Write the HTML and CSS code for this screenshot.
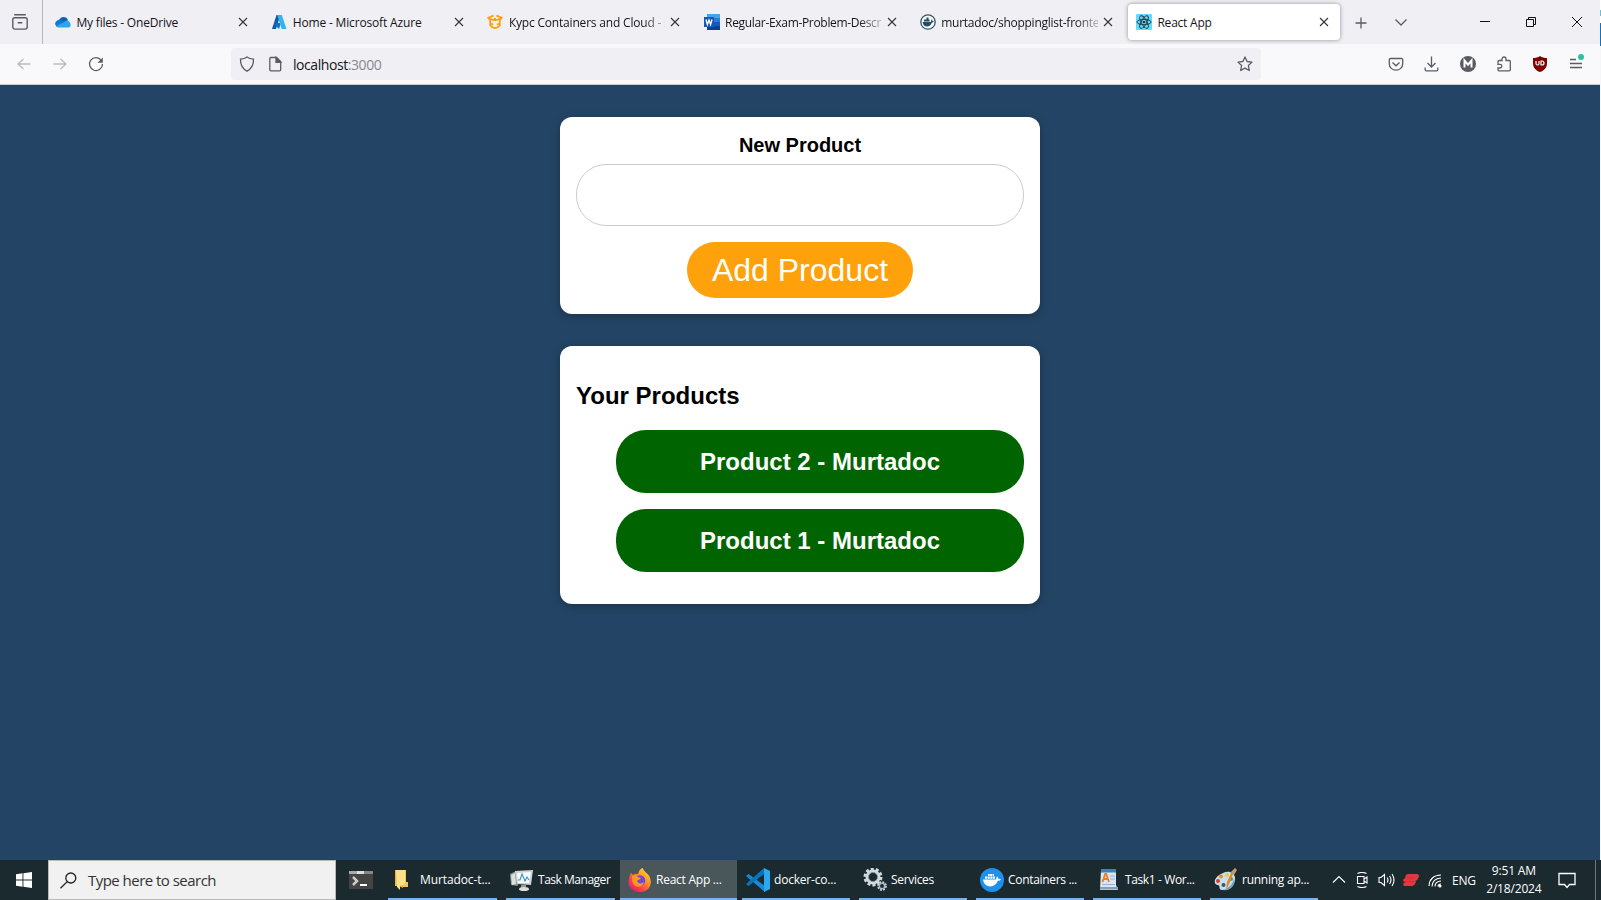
FILE: index.html
```html
<!DOCTYPE html>
<html lang="en">
<head>
<meta charset="utf-8">
<title>React App</title>
<link rel="stylesheet" href="styles.css">
</head>
<body>
<div class="desktop">
<div class="browser">
  <header class="tabbar">
    <div class="view"><svg width="16" height="16" viewBox="0 0 16 16" fill="none" stroke="#5b5b66" stroke-width="1.4" stroke-linecap="round"><path d="M2.7.8h10.600"/><rect x=".8" y="3.800" width="14.400" height="11.300" rx="2"/><path d="M6.200 8.800h3.600"/></svg></div>
    <div class="tabs">
      <div class="tab">
        <svg class="fav" viewBox="0 0 16 16"><path d="M4.500 5.500A4.700 4.700 0 0 1 13 6l-3 4-8-3z" fill="#0b63b8"/><path d="M2 6.800a4 4 0 0 1 4.200-.6L13 10l-9 3A3.300 3.300 0 0 1 2 6.800z" fill="#0f7ad4"/><path d="M9 8.300c2-2.500 6-1.500 6.300 1.300.8 1.600.3 4-2.100 4H4a4 4 0 0 1-3-1.600z" fill="#2aa7ea"/></svg>
        <span class="label l1">My files - OneDrive</span><svg class="x" viewBox="0 0 16 16"><path d="m4 4 8 8m0-8-8 8"/></svg>
      </div>
      <div class="tab">
        <svg class="fav" viewBox="0 0 16 16"><path d="M5.500 1h4L5 15H1z" fill="#15589e"/><path d="M5 9h5l-2 6-4-4z" fill="#0b70cb"/><path d="M6.200 1h4.600L15.500 15h-4.800z" fill="#35b3ee"/></svg>
        <span class="label l2">Home - Microsoft Azure</span><svg class="x" viewBox="0 0 16 16"><path d="m4 4 8 8m0-8-8 8"/></svg>
      </div>
      <div class="tab">
        <svg class="fav" viewBox="0 0 16 16" fill="none" stroke="#ff9f0f" stroke-width="1.700"><path d="M6.600 1.600 1.200 3.600l2 2.600v5.400c1.200 1.700 3 2.500 4.800 2.600 1.800-.1 3.600-.9 4.800-2.600V6.200l2-2.600-5.400-2M1.200 4.200l6 2 1-2M14.800 4.200l-6 2-1-2M3.200 9.600l3 1M12.800 9.600l-3 1"/></svg>
        <span class="label l3">Курс Containers and Cloud - я</span><svg class="x" viewBox="0 0 16 16"><path d="m4 4 8 8m0-8-8 8"/></svg>
      </div>
      <div class="tab">
        <svg class="fav" viewBox="0 0 16 16"><path fill="#41a5ee" d="M3 0h13v4H3z"/><path fill="#2b7cd3" d="M3 4h13v4H3z"/><path fill="#185abd" d="M3 8h13v4H3z"/><path fill="#103f91" d="M3 12h13v4H3z"/><path fill="#1757b5" d="M0 3h10v10H0z"/><path d="m2 5.500 1.400 5L5 6l1.600 4.500 1.400-5" fill="none" stroke="#fff" stroke-width="1.400"/></svg>
        <span class="label l4">Regular-Exam-Problem-Descri</span><svg class="x" viewBox="0 0 16 16"><path d="m4 4 8 8m0-8-8 8"/></svg>
      </div>
      <div class="tab">
        <svg class="fav" viewBox="0 0 16 16"><circle cx="8" cy="8" r="7.200" fill="#f4f8fa" stroke="#355568" stroke-width="1.300"/><path d="M2.600 8h8.200c.4-1 .2-2 .9-2.600.8.5.8 1.300.8 1.700.6 0 1 .1 1.300.4-.4.8-1.100 1.100-2 1.100C10.500 14 3 13.800 2.600 8zM4 5.500h5.500v2H4zM6.500 3.600h2v2h-2z" fill="#254c63"/></svg>
        <span class="label l5">murtadoc/shoppinglist-fronte</span><svg class="x" viewBox="0 0 16 16"><path d="m4 4 8 8m0-8-8 8"/></svg>
      </div>
      <div class="tab active">
        <svg class="fav" viewBox="0 0 16 16"><rect width="16" height="16" rx="1" fill="#61dafb"/><g fill="none" stroke="#20343d" stroke-width=".9"><ellipse cx="8" cy="8" rx="7" ry="2.700"/><ellipse cx="8" cy="8" rx="7" ry="2.700" transform="rotate(60 8 8)"/><ellipse cx="8" cy="8" rx="7" ry="2.700" transform="rotate(120 8 8)"/></g><circle cx="8" cy="8" r="1.300" fill="#20343d"/></svg>
        <span class="label l6">React App</span><svg class="x" viewBox="0 0 16 16"><path d="m4 4 8 8m0-8-8 8"/></svg>
      </div>
    </div>
    <div class="tabtools">
      <svg width="14" height="14" viewBox="0 0 14 14"><path d="M7 1.500v11M1.500 7h11"/></svg>
      <svg width="14" height="14" viewBox="0 0 14 14"><path d="m1.500 3.500 5.500 5.500L12.500 3.500"/></svg>
    </div>
    <div class="window-controls">
      <svg width="10" height="10" viewBox="0 0 10 10"><path d="M0 4.500h10"/></svg>
      <svg width="10" height="10" viewBox="0 0 10 10"><path d="M.5 2.500h7v7h-7zM2.500 2.500v-2h7v7h-2"/></svg>
      <svg width="10" height="10" viewBox="0 0 10 10"><path d="m0 0 10 10M10 0 0 10"/></svg>
    </div>
  </header>
  <nav class="navbar">
    <div class="history">
      <svg class="off" width="16" height="16" viewBox="0 0 16 16"><path d="M14.500 8H2m5.500-5L2 8l5.500 5"/></svg>
      <svg class="off" width="16" height="16" viewBox="0 0 16 16"><path d="M1.500 8H14M8.500 3 14 8l-5.500 5"/></svg>
      <svg width="16" height="16" viewBox="0 0 16 16"><path d="M13.300 4.300A6.500 6.500 0 1 0 14.500 8"/><path d="M14.800 1.500v5.200H9.600z" fill="#5b5b66" stroke="none"/></svg>
    </div>
    <div class="urlbar">
      <svg width="16" height="16" viewBox="0 0 16 16"><path d="M8 .9c2 1.500 4 2 6.500 2.200.2 5.500-1.500 9.500-6.500 12.100C3 12.600 1.300 8.600 1.500 3.100 4 2.900 6 2.400 8 .9z"/></svg>
      <svg width="16" height="16" viewBox="0 0 16 16"><path d="M3.800 1.500h5.800L13.700 5.600v8.200a1 1 0 0 1-1 1H3.800a1 1 0 0 1-1-1V2.500a1 1 0 0 1 1-1z"/><path d="M9 1.500v4.800h4.700z" fill="#5b5b66"/></svg>
      <span class="url">localhost<span class="port">:3000</span></span>
      <svg width="16" height="16" viewBox="0 0 16 16"><path d="m8 1 2.100 4.500 4.900.6-3.600 3.400.9 5L8 12.100l-4.300 2.400.9-5L1 6.100l4.900-.6z" stroke-linejoin="round"/></svg>
    </div>
    <div class="extensions">
      <svg width="16" height="16" viewBox="0 0 16 16"><path d="M2.500 2.500h11a1.200 1.200 0 0 1 1.200 1.200V8A6.700 6.200 0 0 1 1.300 8V3.700a1.200 1.200 0 0 1 1.200-1.200zM4.500 6.500 8 9.800l3.500-3.300"/></svg>
      <svg width="16" height="16" viewBox="0 0 16 16"><path d="M7.500.5v10M3.500 7l4 4 4-4M1.200 11.500v2.300a1 1 0 0 0 1 1h10.600a1 1 0 0 0 1-1v-2.300"/></svg>
      <svg width="16" height="16" viewBox="0 0 16 16"><circle cx="8" cy="8" r="8" fill="#5b5b66" stroke="none"/><path d="M4.500 11.500v-7L8 8.700l3.500-4.200v7" stroke="#fff" stroke-width="2"/></svg>
      <svg width="16" height="16" viewBox="0 0 16 16"><path d="M2 7V5.500a1 1 0 0 1 1-1h3V3a2 2 0 0 1 4 0v1.500h3.300a1 1 0 0 1 1 1v8.300a1 1 0 0 1-1 1H3a1 1 0 0 1-1-1V12h2a1.800 1.800 0 0 0 0-3.600H2z"/></svg>
      <span class="ublock"><svg width="16" height="16" viewBox="0 0 16 16"><path d="M8 0c2 1.500 4.500 2 7 2v5c0 5-3 7.500-7 9-4-1.500-7-4-7-9V2c2.500 0 5-.5 7-2z" fill="#800000" stroke="none"/><path d="M4 5v2.500a1.500 1.500 0 0 0 3 0V5M9 5h1a2 2 0 0 1 0 4H9z" stroke="#fff" stroke-width="1.200"/></svg></span>
      <span class="menu"><svg width="16" height="16" viewBox="0 0 16 16"><path d="M2 3.500h6M2 7.500h12M2 11.500h12"/></svg><i class="dot"></i></span>
    </div>
  </nav>
  <main class="page">
    <section class="card form-card">
      <label class="form-label" for="p">New Product</label>
      <input class="field" id="p" type="text">
      <button class="add">Add Product</button>
    </section>
    <section class="card list-card">
      <h2 class="heading">Your Products</h2>
      <ul class="products"><li class="product">Product 2 - Murtadoc</li><li class="product">Product 1 - Murtadoc</li></ul>
    </section>
  </main>
</div>
<div class="edge"></div>
</div>
<footer class="taskbar">
  <div class="start"><svg width="16" height="16" viewBox="0 0 16 16" fill="#fff"><path d="m0 2.200 6.500-.9v6.200H0zM7.400 1.200 16 0v7.500H7.400zM0 8.400h6.500v6.300L0 13.800zM7.400 8.400H16V16l-8.600-1.200z"/></svg></div>
  <div class="search"><svg width="17" height="17" viewBox="0 0 17 17" fill="none" stroke="#222" stroke-width="1.300"><circle cx="10.800" cy="6" r="5"/><path d="M7.200 9.600.5 16.300"/></svg><span class="hint">Type here to search</span></div>
  <div class="pinned"><svg width="24" height="18" viewBox="0 0 24 18"><path fill="#444" d="M0 0h24v18H0z"/><path fill="#aaa" d="M0 0h8v3H0z"/><path fill="#ddd" d="M8 0h7v3H8z"/><path fill="#888" d="M15 0h9v3h-9z"/><path d="m4 6 4 4-4 4" stroke="#ccc" stroke-width="2.500" fill="none"/><path d="M11 14h7" stroke="#fff" stroke-width="2"/></svg></div>
  <div class="task wide"><svg class="icon" viewBox="-2 0 24 24"><path d="M3 2h9v12h2v5H7z" fill="#f3c75b"/><path d="M1 2h8v18l-4-2H1z" fill="#e9b94a"/><path d="M2 2h9v14l-5 2v4l-3-3z" fill="#ffe08a"/></svg><span class="name n1">Murtadoc-t...</span></div>
  <div class="task wide"><svg class="icon" viewBox="0 0 24 24"><path d="m0 6 6-3 2 15-7-1z" fill="#8b9491"/><path d="m1 7 4-2 1 11-4 1z" fill="#dce0dc"/><path d="m5 3 18-1-2 15-14-1z" fill="#d0d3d0"/><path d="m7 5 14-1-2 11H8z" fill="#f4fbff"/><path d="m8 12 2 0 2-6 3 7 2-4 2 3" fill="none" stroke="#388fb9" stroke-width="1.100"/><path d="M11 17h5v4h-5z" fill="#999"/><ellipse cx="14" cy="21" rx="5" ry="2" fill="#ddd"/></svg><span class="name n2">Task Manager</span></div>
  <div class="task wide current"><svg class="icon" viewBox="0 0 24 24"><defs><linearGradient id="ff" x1="1" y1="0" x2=".2" y2="1"><stop stop-color="#fff044"/><stop offset=".4" stop-color="#ff9a24"/><stop offset=".75" stop-color="#ff3d49"/><stop offset="1" stop-color="#e41b78"/></linearGradient></defs><path d="M3 5c1 0 1 1 2 2 2-2 4-1 5-1 1-4 3-6 5-6 0 4 6 5 7 10C25 18 19 24 12 24S-1 19 1 11c0-2 1-4 2-6z" fill="url(#ff)"/><circle cx="12" cy="12.500" r="5.300" fill="#7046df"/><path d="M4 8c3-1 5 0 6 1l3 1c-1 2-3 1.500-4 3 1 3 5 3 7 1-1 5-7 6-10 3-2-2-2-5-2-9z" fill="#ff981f"/></svg><span class="name n3">React App ...</span></div>
  <div class="task"><svg class="icon" viewBox="0 0 24 24"><path d="M0 8 2.500 6 19 18v6z" fill="#168ad2"/><path d="M0 16 18 0v6L2.500 18z" fill="#0875bd"/><path d="m18 0 6 3v18l-6 3z" fill="#29a9f1"/></svg><span class="name n4">docker-co...</span></div>
  <div class="task"><svg class="icon" viewBox="0 0 24 24" fill="none"><circle cx="10" cy="9" r="8" stroke="#d2dadd" stroke-width="3" stroke-dasharray="3 2.030"/><circle cx="10" cy="9" r="6" stroke="#d2dadd" stroke-width="3"/><circle cx="10" cy="9" r="4.500" stroke="#7d91a2" stroke-width=".8"/><circle cx="19" cy="18" r="3.900" stroke="#c9d3da" stroke-width="2" stroke-dasharray="1.800 1.260"/><circle cx="19" cy="18" r="2.700" stroke="#aab8c5" stroke-width="1.500"/></svg><span class="name n5">Services</span></div>
  <div class="task"><svg class="icon" viewBox="0 0 24 24"><circle cx="12" cy="12" r="12" fill="#1d91ed"/><path d="M3 11.500h13c.5-1 .2-2 1-3 1 .6 1.300 1.400 1.200 2.300 1.200-.2 2.300 0 2.800.6-.7 1-1.800 1.500-3.200 1.400C15 21 4 20 3 11.500zM5 8.500h10v2.300H5zM8 6h6v2H8z" fill="#fff"/><path d="M7.500 8v3m2.500-5v5m2.500-5v5" stroke="#1d91ed" stroke-width=".5"/></svg><span class="name n6">Containers ...</span></div>
  <div class="task"><svg class="icon" viewBox="0 0 24 24"><path d="M4 2h15v15l2 5H3z" fill="#d7e8f5"/><path d="M4 1h15v3.500H4z" fill="#477eb8"/><path d="M3 19h18v2.500H3z" fill="#8c9eab"/><path d="m5.500 14 2.700-8h1l2.800 8M6.500 11H11" fill="none" stroke="#f57b20" stroke-width="1.800"/><path d="M13 8h5m-5 3h5M5 16.500h13" stroke="#8fb2d4"/></svg><span class="name n7">Task1 - Wor...</span></div>
  <div class="task"><svg class="icon" viewBox="0 0 24 24"><path d="M9 5c6-3 13 0 12 7-1 7-6 11-13 10-4 0-1-4-4-5-5 0-5-8 5-12z" fill="#c5e0ef"/><path d="M20 10c-1 7-6 11-12 12 9 1 14-5 12-12z" fill="#69a5cb"/><circle cx="4" cy="13" r="2" fill="#d63d30"/><circle cx="7" cy="8.500" r="2" fill="#e98a2d"/><circle cx="13" cy="7" r="2" fill="#f1c936"/><circle cx="17" cy="11" r="2" fill="#50a74b"/><circle cx="9.500" cy="17" r="2" fill="#3b5868"/><path d="m20 3-4 11-4 9 1-9 5-11z" fill="#e08a2c"/><path d="m17 4 4-4 2 2-3 5z" fill="#c39a71"/></svg><span class="name n8">running ap...</span></div>
  <div class="tray">
    <svg width="14" height="16" viewBox="0 0 14 16"><path d="m1 10.500 6-6 6 6"/></svg>
    <svg width="16" height="16" viewBox="0 0 16 16"><path d="M3.500 1.500Q8-.5 12.500 1.500M3.500 14.500q4.500 2 9 0M3.500 4.500h6.500v7H3.500zM10 7l3-2v6l-3-2"/></svg>
    <svg width="17" height="16" viewBox="0 0 17 16"><path d="M1 5.500h2l3.500-3v11L3 10.500H1zM9 5.500q2 2.500 0 5M11.500 4q3 4 0 8M14 2q4 6 0 12"/></svg>
    <svg width="16" height="16" viewBox="0 0 16 16"><path d="M5.500 2H14a2 2 0 0 1 1.700 3l-.7 1.800A3.500 3.500 0 0 1 12 9l1 .5-.6 1.800A3.500 3.500 0 0 1 9.500 14H2a1.600 1.600 0 0 1-1.600-2.400A4 4 0 0 1 3 9.700H1.500A1.500 1.500 0 0 1 .3 7.500 3 3 0 0 1 3 6l-1-.5.5-1.500A3 3 0 0 1 5.500 2z" fill="#e03a40" stroke="none"/><path d="M4 6h8M3 9.500h8" stroke="#a8333a" stroke-width=".6"/></svg>
    <svg width="16" height="16" viewBox="0 0 16 16"><path d="M2 14Q2.500 3.500 14 3M5 14.500Q5.500 6.500 14 6M8 14.500Q8 9.500 14 9M11 14.500q0-2.500 3-2.500" /><circle cx="13" cy="14" r="1" fill="#fff"/></svg>
    <span class="lang">ENG</span>
    <div class="clock"><span class="time">9:51 AM</span><span class="date">2/18/2024</span></div>
    <svg width="18" height="18" viewBox="0 0 18 18"><path d="M1 2.500h16v11h-5.500L9 16.500l-2.500-3H1z" stroke-width="1.300"/></svg>
    <i class="peek"></i>
  </div>
</footer>
</body>
</html>
```

FILE: styles.css
```css
* { box-sizing: border-box; }
body { margin: 0; width: 1601px; height: 900px; display: flex; flex-direction: column; overflow: hidden; font-family: "Open Sans", "Noto Sans", sans-serif; }
svg { display: block; flex: none; }
.desktop { height: 860px; display: flex; }
.browser { width: 1600px; display: flex; flex-direction: column; }
.edge { width: 1px; background: linear-gradient(#fff 0 10px, #6fb9da 10px 16px, #fff 16px 23px, #0b73c4 23px 46px, #f4f6f8 46px); }

.tabbar { height: 44px; display: flex; background: #f0eff4; }
.view { width: 43px; display: flex; align-items: center; padding-left: 12px; border-right: 1px solid #b8b7bd; }
.tabs { display: flex; padding: 4px 0 4px 2px; }
.tab { width: 212.200px; margin: 0 2px; padding: 0 8px; height: 36px; display: flex; align-items: center; border-radius: 4px; }
.active { background: #fff; box-shadow: 0 0 4px rgba(0,0,0,.4); }
.fav { width: 16px; height: 16px; margin-right: 5.500px; }
.label { flex: none; width: 156.500px; margin-right: 2px; padding-top: 2px; white-space: nowrap; font-size: 12px; line-height: 20px; color: #15141a; }
.l1 { letter-spacing: -.200px; }
.l2 { letter-spacing: -.160px; }
.l3 { letter-spacing: -.190px; }
.l4 { letter-spacing: -.320px; }
.l5 { letter-spacing: -.260px; }
.l6 { letter-spacing: -.220px; }
.l3, .l4, .l5 { -webkit-mask-image: linear-gradient(90deg, #000 134px, transparent 164px); mask-image: linear-gradient(90deg, #000 134px, transparent 164px); -webkit-mask-clip: no-clip; mask-clip: no-clip; }
.x { width: 16px; height: 16px; fill: none; stroke: #35343a; stroke-width: 1.100; }
.tabtools { display: flex; align-items: center; gap: 26px; padding: 1px 0 0 12px; fill: none; stroke: #5b5b66; stroke-width: 1.300; }
.window-controls { margin-left: auto; display: flex; align-items: center; gap: 36px; padding-right: 18px; fill: none; stroke: #111; stroke-width: 1; }

.navbar { height: 41px; display: flex; align-items: center; background: #f9f9fb; border-bottom: 1px solid #c9c9ce; fill: none; stroke: #5b5b66; stroke-width: 1.300; }
.history { width: 231px; display: flex; gap: 20px; padding-left: 16px; }
.off { opacity: .4; }
.urlbar { width: 1030px; height: 32px; display: flex; align-items: center; gap: 12px; padding: 0 8px; border-radius: 4px; background: #f0eff4; }
.url { flex: 1; margin-left: -2px; padding-top: 2px; font-size: 14px; letter-spacing: -.430px; color: #15141a; line-height: 20px; }
.port { color: #88888f; }
.extensions { margin-left: auto; display: flex; gap: 20px; padding-right: 16px; }
.menu { position: relative; }
.dot { position: absolute; top: -2px; right: 0; width: 6px; height: 6px; border-radius: 50%; background: #2ac3a2; }

.page { flex: 1; display: flex; flex-direction: column; align-items: center; gap: 32px; padding-top: 32px; background: #234465; font-family: "Liberation Sans", Arial, sans-serif; }
.card { width: 480px; padding: 16px; border-radius: 12px; background: #fff; box-shadow: 0 2px 8px rgba(0,0,0,.26); }
.form-card { height: 197px; display: flex; flex-direction: column; align-items: center; }
.form-label { height: 31px; line-height: 24px; font-size: 20px; font-weight: bold; color: #000; }
.field { width: 448px; height: 62px; border: 1px solid #ccc; border-radius: 30px; background: #fff; }
.add { width: 226px; height: 56px; margin-top: 16px; padding: 0; border: 0; border-radius: 28px; background: #ffa10a; color: #fff; font: 32px/54px "Liberation Sans", Arial, sans-serif; }
.list-card { height: 258px; }
.heading { margin: 20px 0; font-size: 24px; line-height: 28px; color: #000; }
.products { list-style: none; margin: 0; padding: 0 0 0 40px; display: grid; gap: 16px; }
.product { height: 63px; border-radius: 30px; background: #006400; color: #fff; font-size: 24px; font-weight: bold; line-height: 63px; text-align: center; }

.taskbar { height: 40px; display: flex; align-items: center; background: #1a2a2f; color: #fff; font-size: 12px; }
.start { width: 48px; padding-left: 16px; }
.search { width: 288px; height: 40px; display: flex; align-items: center; gap: 11px; padding-left: 11px; border: 1px solid #b9b9b9; background: #f1f1f1; color: #333; }
.hint { font-size: 15px; letter-spacing: -.530px; }
.pinned { width: 48px; padding-left: 13px; }
.task { width: 117px; height: 40px; display: flex; align-items: center; gap: 4px; padding-left: 8px; background: linear-gradient(#76b4ee, #76b4ee) 4px 38px / 108px 2px no-repeat; }
.wide { width: 118px; background-size: 109px 2px; }
.current { background: linear-gradient(#76b4ee, #76b4ee) 0 38px / 117px 2px no-repeat, linear-gradient(#4a575a, #4a575a) 0 0 / 117px 40px no-repeat; }
.icon { width: 24px; height: 24px; }
.name { white-space: nowrap; line-height: 18px; }
.n1 { letter-spacing: -.100px; }
.n2 { letter-spacing: -.480px; }
.n3, .n8 { letter-spacing: -.250px; }
.n4 { letter-spacing: -.200px; }
.n5, .n6 { letter-spacing: -.320px; }
.n7 { letter-spacing: -.380px; }
.tray { flex: 1; display: flex; align-items: center; height: 40px; padding-left: 9px; fill: none; stroke: #fff; stroke-width: 1.100; gap: 8px; white-space: nowrap; }
.lang { margin-left: 1px; letter-spacing: -.200px; }
.clock { width: 66px; margin: 0 3px 0 -3px; display: flex; flex-direction: column; text-align: center; line-height: 18px; letter-spacing: -.180px; }
.peek { margin-left: auto; width: 6px; height: 40px; border-left: 1px solid #6d7779; }
```
